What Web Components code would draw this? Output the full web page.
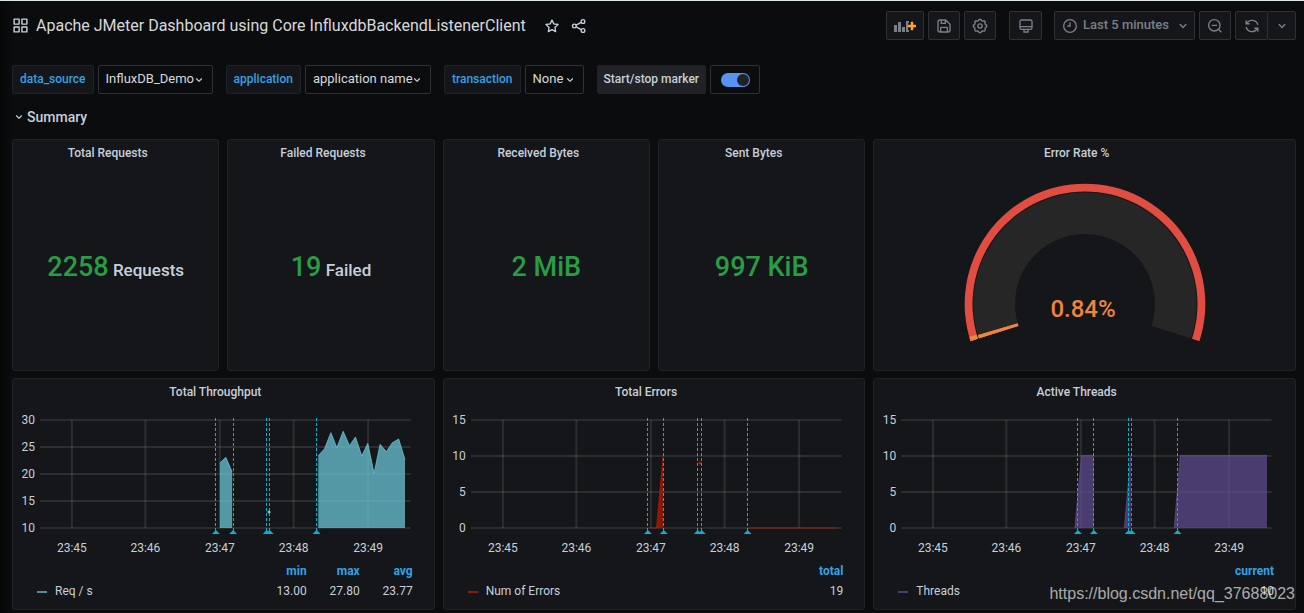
<!DOCTYPE html>
<html lang="en">
<head>
<meta charset="utf-8">
<meta name="viewport" content="width=device-width, initial-scale=1">
<title>Apache JMeter Dashboard</title>
<style>
  html { background: #0b0c0e; }
  body {
    margin: 0;
    font: 12px/16px Roboto, "Liberation Sans", sans-serif;
    color: #c7d0d9;
    --text: #c7d0d9;
    --muted: #7b8087;
    --link: #33a2e5;
    --panel: #141619;
    --line: #202226;
    --control-line: #2c3235;
  }
</style>
</head>
<body>
<jmeter-dashboard></jmeter-dashboard>

<script>
const define = (name, html, setup) => {
  const template = document.createElement('template');
  template.innerHTML = html;
  customElements.define(name, class extends HTMLElement {
    connectedCallback() {
      if (this.shadowRoot) return;
      const root = this.attachShadow({ mode: 'open' });
      root.append(template.content.cloneNode(true));
      if (setup) setup(this, root);
    }
  });
};

/* ---------- icons ---------- */
const gear = () => {
  const pts = [];
  for (let i = 0; i < 96; i++) {
    const a = i / 96 * Math.PI * 2;
    const r = 9.2 + Math.max(-0.8, Math.min(0.8, 1.6 * Math.cos(a * 8)));
    pts.push((12 + r * Math.cos(a)).toFixed(2) + ' ' + (12 + r * Math.sin(a)).toFixed(2));
  }
  return 'M' + pts.join('L') + 'Z';
};
const ICONS = {
  apps: '<path fill="currentColor" d="M10,13H3a1,1,0,0,0-1,1v7a1,1,0,0,0,1,1h7a1,1,0,0,0,1-1V14A1,1,0,0,0,10,13ZM9,20H4V15H9ZM21,2H14a1,1,0,0,0-1,1v7a1,1,0,0,0,1,1h7a1,1,0,0,0,1-1V3A1,1,0,0,0,21,2ZM20,9H15V4h5Zm1,4H14a1,1,0,0,0-1,1v7a1,1,0,0,0,1,1h7a1,1,0,0,0,1-1V14A1,1,0,0,0,21,13Zm-1,7H15V15h5ZM10,2H3A1,1,0,0,0,2,3v7a1,1,0,0,0,1,1h7a1,1,0,0,0,1-1V3A1,1,0,0,0,10,2ZM9,9H4V4H9Z"/>',
  star: '<path stroke-linejoin="round" d="M12 3l2.700 5.800 6.300.9-4.600 4.400 1.100 6.300L12 17.400l-5.500 3 1.100-6.300L3 9.700l6.300-.9z"/>',
  share: '<circle cx="5" cy="12" r="2.800"/><circle cx="18" cy="5.200" r="2.800"/><circle cx="18" cy="18.800" r="2.800"/><path d="M7.600 10.600l7.700-4M7.600 13.400l7.700 4"/>',
  down: '<path fill="currentColor" stroke="none" d="M17,9.17a1,1,0,0,0-1.41,0L12,12.71,8.46,9.17a1,1,0,0,0-1.41,0,1,1,0,0,0,0,1.42l4.24,4.24a1,1,0,0,0,1.42,0L17,10.59A1,1,0,0,0,17,9.17Z"/>',
  save: '<path d="M6 3h8.5L21 9.5V18a3 3 0 0 1-3 3H6a3 3 0 0 1-3-3V6a3 3 0 0 1 3-3zM8 3v5h6V3M7 21v-6a1 1 0 0 1 1-1h8a1 1 0 0 1 1 1v6"/>',
  gear: '<path d="' + gear() + '"/><circle cx="12" cy="12" r="3.2"/>',
  desktop: '<rect x="3" y="3" width="18" height="14" rx="2.5"/><path d="M3 13h18M9 17v4h6v-4"/>',
  clock: '<circle cx="12" cy="12" r="9.5"/><path d="M12 6.5V12H8"/>',
  zoomout: '<circle cx="11" cy="11" r="8.500"/><path d="M17 17l4.5 4.5M7 11h8"/>',
  sync: '<path d="M4 8.5a9 9 0 0 1 16.8 2M20 15.5a9 9 0 0 1-16.8-2M3.2 3.5V8.600H8.5M20.800 20.500V15.400H15.500"/>',
};
define('dash-icon', `
  <style>
    :host { display: block; width: var(--size, 16px); height: var(--size, 16px); flex: none; }
    svg { display: block; width: 100%; height: 100%; }
  </style>
  <svg viewBox="0 0 24 24" fill="none" stroke="currentColor" stroke-width="2" aria-hidden="true"></svg>
`, (el, root) => {
  const svg = root.querySelector('svg');
  const name = el.getAttribute('name');
  svg.innerHTML = ICONS[name];
  if (name === 'apps') svg.setAttribute('stroke', 'none');
});

define('add-panel-icon', `
  <style>:host { display: block; } svg { display: block; }</style>
  <svg width="22" height="16" viewBox="0 0 22 16" aria-hidden="true">
    <path fill="#7b8087" d="M0 7h3v7H0zM4 4h3v10H4zM8 9h3v5H8zM12 3h3v2h-1v7h1v2h-3z"/>
    <path fill="#ffa62e" d="M17 4h2v3h3v2h-3v3h-2V9h-3V7h3z" stroke="#ffa62e" stroke-width=".5"/>
  </svg>
`);

/* ---------- controls ---------- */
define('tool-button', `
  <style>
    :host { display: block; }
    button {
      box-sizing: border-box; display: flex; align-items: center; justify-content: center;
      height: 29px; min-width: var(--width, 32px); padding: 0 4px; gap: 6px;
      border: 1px solid var(--control-line); border-radius: 2px;
      background: var(--panel); color: var(--muted); font: inherit; cursor: pointer;
    }
  </style>
  <button type="button"><slot></slot></button>
`, (el, root) => root.querySelector('button').setAttribute('aria-label', el.getAttribute('label')));

define('time-picker', `
  <style>
    :host { display: block; }
    button {
      box-sizing: border-box; display: flex; align-items: center; height: 29px; width: 141px;
      padding: 0 3px 0 7px; gap: 5px; border: 1px solid var(--control-line); border-radius: 2px;
      background: var(--panel); color: var(--muted); font: 500 13px/16px Roboto, sans-serif; cursor: pointer;
    }
    span { flex: 1; padding-bottom: 2px; text-align: left; white-space: nowrap; }
  </style>
  <button type="button"><dash-icon name="clock"></dash-icon><span>Last 5 minutes</span><dash-icon name="down"></dash-icon></button>
`);

define('dash-header', `
  <style>
    :host { display: flex; align-items: center; justify-content: space-between; gap: 16px; }
    .title, .tools { display: flex; align-items: center; }
    h1 { margin: 0 18px 0 7px; font-size: 16px; line-height: 20px; font-weight: 400; color: #d8d9da; white-space: nowrap; }
    .title dash-icon { color: #c7d0d9; }
    .title > dash-icon { --size: 17px; }
    .title button { border: 0; padding: 0; margin-right: 11px; background: none; color: inherit; cursor: pointer; }
    .tools { gap: 4px; }
    .apart { margin-left: 9px; }
    time-picker { margin-left: 8px; }
    .pair { display: flex; }
    .pair tool-button + tool-button { margin-left: -1px; }
  </style>
  <div class="title">
    <dash-icon name="apps"></dash-icon>
    <h1>Apache JMeter Dashboard using Core InfluxdbBackendListenerClient</h1>
    <button type="button" aria-label="Mark as favourite"><dash-icon name="star"></dash-icon></button>
    <button type="button" aria-label="Share dashboard"><dash-icon name="share"></dash-icon></button>
  </div>
  <div class="tools">
    <tool-button label="Add panel" style="--width: 38px"><add-panel-icon></add-panel-icon></tool-button>
    <tool-button label="Save dashboard"><dash-icon name="save"></dash-icon></tool-button>
    <tool-button label="Dashboard settings"><dash-icon name="gear"></dash-icon></tool-button>
    <tool-button class="apart" label="Cycle view mode" style="--width: 33px"><dash-icon name="desktop"></dash-icon></tool-button>
    <time-picker></time-picker>
    <tool-button label="Zoom out"><dash-icon name="zoomout"></dash-icon></tool-button>
    <div class="pair">
      <tool-button label="Refresh" style="--width: 33px"><dash-icon name="sync"></dash-icon></tool-button>
      <tool-button label="Refresh interval" style="--width: 29px"><dash-icon name="down"></dash-icon></tool-button>
    </div>
  </div>
`);

define('variable-select', `
  <style>
    :host { display: flex; gap: 4px; }
    label {
      box-sizing: border-box; height: 29px; padding: 0 7px; border: 1px solid var(--line); border-radius: 2px;
      background: var(--panel); color: var(--link); font: 500 12px/26px Roboto, sans-serif;
    }
    .box { display: grid; align-items: center; }
    .box > * { grid-area: 1 / 1; }
    select {
      appearance: none; box-sizing: border-box; height: 29px; min-width: 59px; padding: 0 17px 2px 7px;
      border: 1px solid var(--control-line); border-radius: 2px;
      background: #0b0c0e; color: #d8d9da; font: 13px/16px Roboto, sans-serif;
    }
    dash-icon { --size: 14px; justify-self: end; margin-right: 7px; pointer-events: none; }
  </style>
  <label for="value"></label>
  <div class="box"><select id="value"><option></option></select><dash-icon name="down"></dash-icon></div>
`, (el, root) => {
  root.querySelector('label').textContent = el.getAttribute('label');
  root.querySelector('option').textContent = el.getAttribute('value');
});

define('marker-switch', `
  <style>
    :host { display: flex; gap: 4px; }
    label {
      box-sizing: border-box; height: 29px; padding: 0 6px; border: 1px solid var(--line); border-radius: 2px;
      background: #202226; color: var(--text); font: 500 12px/26px Roboto, sans-serif;
    }
    .box {
      box-sizing: border-box; display: flex; align-items: center; justify-content: center;
      width: 50px; height: 29px; border: 1px solid var(--control-line); border-radius: 2px;
    }
    input {
      appearance: none; display: flex; justify-content: flex-end; align-items: center; box-sizing: border-box;
      width: 29px; height: 14px; margin: 0; padding: 1px; border-radius: 7px; background: #5794f2;
    }
    input::before { content: ""; width: 12px; height: 12px; border-radius: 50%; background: #202226; }
  </style>
  <label for="toggle">Start/stop marker</label>
  <div class="box"><input id="toggle" type="checkbox" role="switch" checked></div>
`);

define('row-title', `
  <style>
    :host { display: flex; }
    button {
      display: flex; align-items: center; gap: 1px; border: 0; padding: 0; background: none;
      color: var(--text); font: 500 14px/20px Roboto, sans-serif; cursor: pointer;
    }
    dash-icon { --size: 14px; }
  </style>
  <button type="button" aria-expanded="true"><dash-icon name="down"></dash-icon><slot></slot></button>
`);

/* ---------- panels ---------- */
define('dash-panel', `
  <style>
    :host {
      display: flex; flex-direction: column; box-sizing: border-box; min-width: 0; min-height: 232px;
      border: 1px solid var(--line); border-radius: 3px; background: var(--panel);
    }
    h2 { margin: 0; padding: 5px 16px 5px 0; text-align: center; font-size: 12px; line-height: 16px; font-weight: 500; color: var(--text); }
    .body { flex: 1; display: flex; flex-direction: column; }
  </style>
  <h2></h2>
  <div class="body"><slot></slot></div>
`, (el, root) => { root.querySelector('h2').textContent = el.getAttribute('heading'); });

define('stat-value', `
  <style>
    :host { flex: 1; display: flex; align-items: center; justify-content: center; }
    p { margin: 0; font-size: 27px; line-height: 32px; font-weight: 500; color: #299c46; white-space: nowrap; }
    small { font-size: 17px; color: var(--text); }
  </style>
  <p><slot></slot><small></small></p>
`, (el, root) => {
  const unit = el.getAttribute('unit');
  if (unit) root.querySelector('small').textContent = ' ' + unit;
});

define('error-gauge', `
  <style>
    :host { display: flex; justify-content: center; padding: 17px 0 0; }
    svg { display: block; width: 242px; height: 162px; }
    text { font: 500 24px Roboto, sans-serif; fill: #ef843c; text-anchor: middle; }
  </style>
  <svg viewBox="-121 -121 242 162" role="img" aria-label="Error rate"><g></g><text x="-2" y="13"></text></svg>
`, (el, root) => {
  const value = Number(el.getAttribute('value'));
  const at = (t, r) => {
    const a = (162 + 216 * t) * Math.PI / 180;
    return (r * Math.cos(a)).toFixed(2) + ' ' + (r * Math.sin(a)).toFixed(2);
  };
  const sector = (t0, t1, r0, r1, fill) => {
    const big = (t1 - t0) * 216 > 180 ? 1 : 0;
    return `<path fill="${fill}" d="M${at(t0, r1)}A${r1} ${r1} 0 ${big} 1 ${at(t1, r1)}L${at(t1, r0)}A${r0} ${r0} 0 ${big} 0 ${at(t0, r0)}Z"/>`;
  };
  const part = value / 100;
  root.querySelector('g').innerHTML =
    sector(0, 1, 70, 111.5, '#262626') +
    sector(0, part, 70, 111.5, '#ef843c') +
    `<path stroke="#ef843c" d="M${at(part / 2, 70)}L${at(part / 2, 111.5)}" stroke-width="3"/>` +
    sector(0, 1, 112.5, 120.3, '#e24d42') +
    sector(0, 0.01, 112.5, 120.3, '#ef843c');
  root.querySelector('text').textContent = value + '%';
});

/* Series live in a 1115 x 324 plot space that stretches with the panel. */
const W = 1115, H = 324;
const CHARTS = {
  throughput: {
    color: '#6ed0e0', y: [30, 25, 20, 15, 10], markers: [529, 581, 682, 691, 832], dot: [689, 276],
    lines: [
      [[541, 129], [559, 112], [578, 156]],
      [[837, 107], [856, 86], [875, 38], [893, 83], [912, 34], [931, 77], [949, 51], [968, 108], [986, 70],
       [1005, 160], [1023, 73], [1042, 95], [1060, 68], [1079, 57], [1098, 119]],
    ],
  },
  errors: {
    color: '#bf1b00', y: [15, 10, 5, 0], markers: [532, 580, 682, 694, 832], dot: [689, 129],
    lines: [[[540, 324], [558, 324], [578, 107]], [[832, 324], [1098, 324]]],
  },
  threads: {
    color: '#614d93', y: [15, 10, 5, 0], markers: [532, 580, 685, 694, 832],
    lines: [
      [[523, 324], [543, 106], [580, 106]],
      [[672, 324], [691, 106]],
      [[822, 324], [840, 106], [1101, 106]],
    ],
  },
};
const TIMES = [['23:45', 96], ['23:46', 317], ['23:47', 541], ['23:48', 763], ['23:49', 987]];

define('time-chart', `
  <style>
    :host { display: grid; grid-template-columns: 22px minmax(0, 1fr); column-gap: 5px; padding: 7px 23px 0 0; }
    .y { display: flex; flex-direction: column; justify-content: space-between; height: 124px; text-align: right; }
    .plot { display: block; width: 100%; height: 108px; margin: 8px 0 33px; overflow: visible; }
    .grid { stroke: #c8c8c8; stroke-opacity: .13; stroke-width: 2; }
    .edge { stroke-width: 1; stroke-opacity: .25; }
    .marker { stroke: #00b4d8; stroke-dasharray: 3 2; }
    text { font: 12px Roboto, sans-serif; fill: var(--text); text-anchor: middle; }
  </style>
  <div class="y"></div>
  <svg class="plot" role="img"></svg>
`, (el, root) => {
  const chart = CHARTS[el.getAttribute('series')];
  const pc = (v, whole) => (v / whole * 100).toFixed(3) + '%';
  root.querySelector('.y').innerHTML = chart.y.map(v => `<span>${v}</span>`).join('');
  let out = '';
  chart.y.forEach((v, i) => {
    const y = pc(i, chart.y.length - 1);
    const edge = i === 0 || i === chart.y.length - 1 ? ' edge' : '';
    out += `<line class="grid${edge}" x1="0" x2="100%" y1="${y}" y2="${y}"/>`;
  });
  TIMES.forEach(([t, x]) => {
    out += `<line class="grid" x1="${pc(x, W)}" x2="${pc(x, W)}" y1="0" y2="100%"/>`;
  });
  out += `<svg width="100%" height="100%" viewBox="0 0 ${W} ${H}" preserveAspectRatio="none" overflow="visible">`;
  chart.lines.forEach(points => {
    const first = points[0][0], last = points[points.length - 1][0];
    const path = points.map(p => p.join(' ')).join('L');
    out += `<path fill="${chart.color}" fill-opacity=".7" d="M${first} ${H}L${path}L${last} ${H}Z"/>`;
    out += `<path fill="none" stroke="${chart.color}" stroke-opacity=".7" vector-effect="non-scaling-stroke" d="M${path}"/>`;
  });
  out += '</svg>';
  if (chart.dot) out += `<svg x="${pc(chart.dot[0], W)}" y="${pc(chart.dot[1], H)}" overflow="visible"><circle r="1.5" fill="${chart.color}"/></svg>`;
  chart.markers.forEach(x => {
    out += `<svg x="${pc(x, W)}" y="0" overflow="visible"><line class="marker" x1="0" x2="0" y1="-2" y2="112" shape-rendering="crispEdges"/>
      <path fill="#00b4d8" d="M-4 114L0 110L4 114Z"/></svg>`;
  });
  TIMES.forEach(([t, x]) => { out += `<text x="${pc(x, W)}" y="132">${t}</text>`; });
  const svg = root.querySelector('svg');
  svg.innerHTML = out;
  svg.setAttribute('aria-label', el.getAttribute('series'));
});

define('chart-legend', `
  <style>
    :host { display: block; padding: 0 21px 0 24px; }
    table { width: 100%; border-collapse: collapse; }
    th, td { padding: 0; height: 20px; text-align: right; font-weight: 400; }
    thead th { color: var(--link); font-weight: 700; }
    .num { width: 53px; }
    tbody th { text-align: left; }
    i { display: inline-block; width: 10px; height: 2px; margin-right: 8px; vertical-align: middle; }
  </style>
  <table><thead><tr><td></td></tr></thead><tbody><tr><th scope="row"><i></i><span></span></th></tr></tbody></table>
`, (el, root) => {
  const stats = el.getAttribute('stats').split(',').map(s => s.split(':'));
  root.querySelector('span').textContent = el.getAttribute('name');
  root.querySelector('i').style.background = el.getAttribute('color');
  stats.forEach(([key, value]) => {
    root.querySelector('thead tr').insertAdjacentHTML('beforeend', `<th scope="col" class="num">${key}</th>`);
    root.querySelector('tbody tr').insertAdjacentHTML('beforeend', `<td class="num">${value}</td>`);
  });
});

/* ---------- page ---------- */
define('jmeter-dashboard', `
  <style>
    :host {
      display: block; position: relative; padding: 10px 8px 3px 12px; border-top: 1px solid #dde6e4;
      background: linear-gradient(90deg, #050606, #0b0c0e 12px);
    }
    .variables { display: flex; flex-wrap: wrap; gap: 8px 13px; margin: 25px 0 13px; }
    main { display: grid; grid-template-columns: repeat(6, minmax(0, 1fr)); gap: 7px 8px; margin-top: 12px; }
    .wide { grid-column: span 2; }
    .watermark {
      position: absolute; right: 9px; bottom: 10px; font: 16px/18px "Liberation Sans", sans-serif;
      color: rgba(255, 255, 255, .65);
    }
  </style>
  <dash-header></dash-header>
  <div class="variables">
    <variable-select label="data_source" value="InfluxDB_Demo"></variable-select>
    <variable-select label="application" value="application name"></variable-select>
    <variable-select label="transaction" value="None"></variable-select>
    <marker-switch></marker-switch>
  </div>
  <row-title>Summary</row-title>
  <main>
    <dash-panel heading="Total Requests"><stat-value unit="Requests">2258</stat-value></dash-panel>
    <dash-panel heading="Failed Requests"><stat-value unit="Failed">19</stat-value></dash-panel>
    <dash-panel heading="Received Bytes"><stat-value>2 MiB</stat-value></dash-panel>
    <dash-panel heading="Sent Bytes"><stat-value>997 KiB</stat-value></dash-panel>
    <dash-panel class="wide" heading="Error Rate %"><error-gauge value="0.84"></error-gauge></dash-panel>
    <dash-panel class="wide" heading="Total Throughput">
      <time-chart series="throughput"></time-chart>
      <chart-legend name="Req / s" color="#4f8f9a" stats="min:13.00,max:27.80,avg:23.77"></chart-legend>
    </dash-panel>
    <dash-panel class="wide" heading="Total Errors">
      <time-chart series="errors"></time-chart>
      <chart-legend name="Num of Errors" color="#8b1a0a" stats="total:19"></chart-legend>
    </dash-panel>
    <dash-panel class="wide" heading="Active Threads">
      <time-chart series="threads"></time-chart>
      <chart-legend name="Threads" color="#4a3c6e" stats="current:10"></chart-legend>
    </dash-panel>
  </main>
  <div class="watermark">https://blog.csdn.net/qq_37688023</div>
`);
</script>
</body>
</html>
